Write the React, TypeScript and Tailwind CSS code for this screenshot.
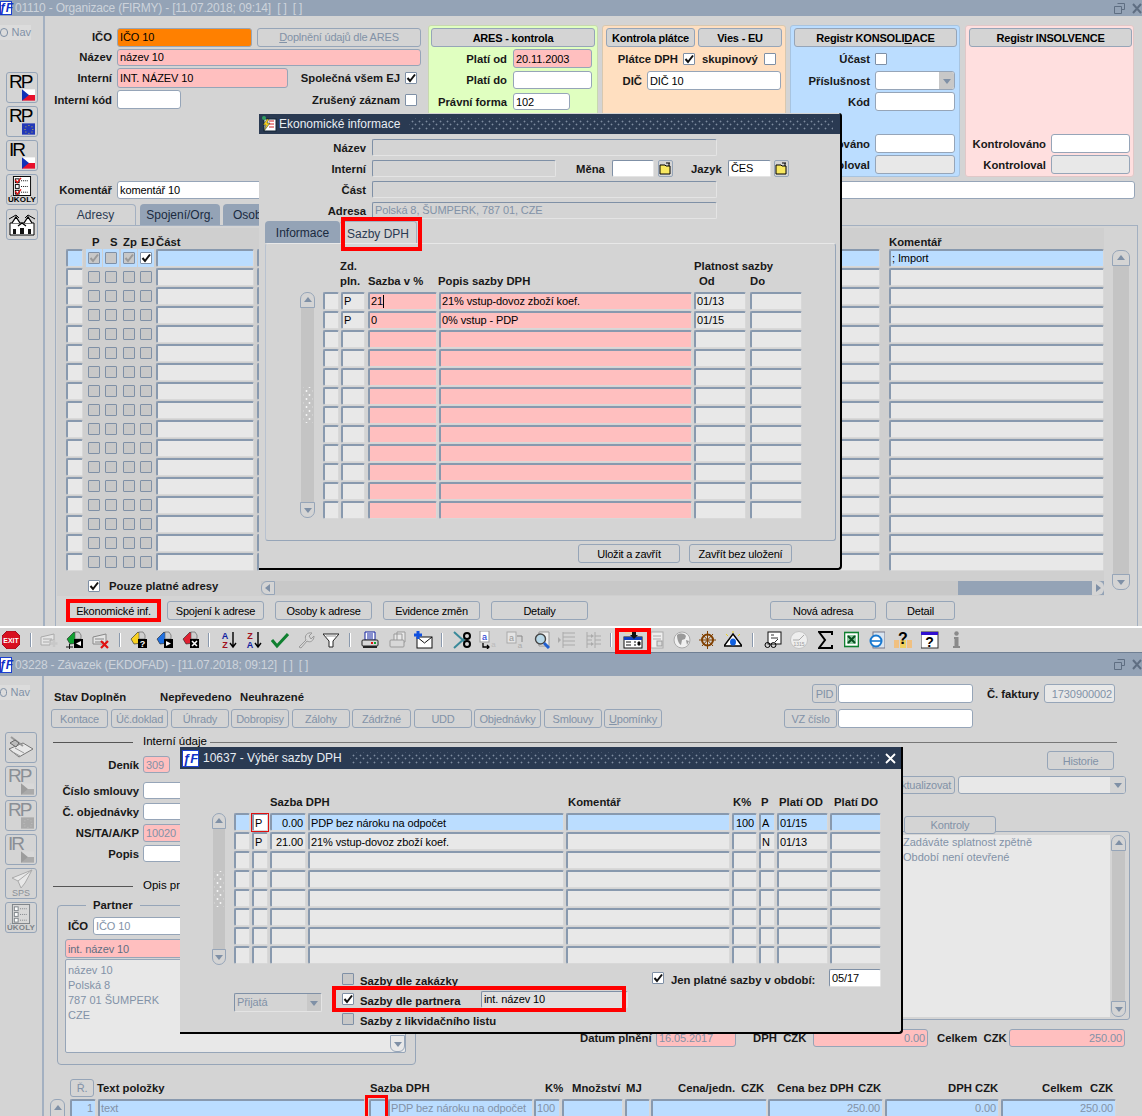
import type { ReactNode } from "react";

type P = { className?: string; children?: ReactNode };

const MUTED = "text-[#8292a7]";

const Field = ({ className = "", children }: P) => (
  <div className={`flex shrink-0 items-center overflow-hidden whitespace-nowrap rounded-[3px] border border-[#96a5b8] px-[2px] pt-[1px] text-[11px] leading-none tracking-[-0.1px] ${className}`}>
    {children}
  </div>
);

const Inset = ({ className = "", children }: P) => (
  <div className={`flex shrink-0 items-center overflow-hidden whitespace-nowrap rounded-[2px] border border-[#e4e4e4] border-t-[#7f90a6] border-l-[#7f90a6] px-[2px] text-[11px] leading-none tracking-[-0.1px] ${className}`}>
    {children}
  </div>
);

const Cell = ({ className = "", children }: P) => (
  <div className={`flex h-[18px] shrink-0 items-center overflow-hidden whitespace-nowrap rounded-[2px] border border-[#d8d8d8] border-t-2 border-t-[#8899ae] border-l-2 border-l-[#8899ae] pl-[1px] pr-[2px] text-[11px] leading-none tracking-[-0.1px] ${className}`}>
    {children}
  </div>
);

const Btn = ({ className = "", children }: P) => (
  <div className={`relative flex shrink-0 items-center justify-center whitespace-nowrap rounded-[3px] border border-[#96a5b8] pt-[1px] text-[11px] leading-none tracking-[-0.2px] ${className}`}>
    {children}
  </div>
);

const Lbl = ({ className = "", children }: P) => (
  <div className={`shrink-0 whitespace-nowrap pt-[2px] text-[11.3px] font-bold leading-none text-[#181818] ${className}`}>{children}</div>
);

const Red = ({ className = "" }: P) => <div className={`pointer-events-none absolute z-10 border-[3px] border-[#ff0000] ${className}`} />;

const Check = ({ on, dim, className = "" }: { on?: boolean; dim?: boolean; className?: string }) => (
  <div className={`flex h-[12px] w-[12px] shrink-0 items-center justify-center rounded-[1px] border border-[#7f90a6] ${dim ? "bg-[#c8c8c8]" : "bg-white"} ${className}`}>
    {on && (
      <svg width="10" height="10" viewBox="0 0 10 10">
        <path d="M1.5 5 L4 8 L9 1.5" fill="none" stroke={dim ? "#9a9a9a" : "#111"} strokeWidth="2" />
      </svg>
    )}
  </div>
);

const Arrow = ({ dir, className = "" }: { dir: "up" | "down" | "left" | "right"; className?: string }) => {
  const d = { up: "M1 7 L5 2 L9 7Z", down: "M1 3 L5 8 L9 3Z", left: "M7 1 L2 5 L7 9Z", right: "M3 1 L8 5 L3 9Z" }[dir];
  return (
    <svg width="10" height="10" viewBox="0 0 10 10" className={className}>
      <path d={d} fill="#7f90a6" />
    </svg>
  );
};

const VScroll = ({ className = "", grip }: { className?: string; grip?: boolean }) => (
  <div className={`flex shrink-0 flex-col items-center ${className}`}>
    <div className="flex h-[16px] w-full shrink-0 items-center justify-center rounded-t-[7px] border border-[#96a5b8]">
      <Arrow dir="up" />
    </div>
    <div className="flex w-[88%] flex-1 items-center justify-center bg-[#c4c4c4]">
      {grip && <div className="h-[36px] w-[10px] bg-[radial-gradient(circle,#f4f4f4_0.9px,transparent_1.2px),radial-gradient(circle,#f4f4f4_0.9px,transparent_1.2px)] bg-[length:7px_8px] bg-[position:0_0,3px_4px]" />}
    </div>
    <div className="flex h-[16px] w-full shrink-0 items-center justify-center rounded-b-[7px] border border-[#96a5b8]">
      <Arrow dir="down" />
    </div>
  </div>
);

const Logo = ({ className = "" }: P) => (
  <div className={`flex shrink-0 items-center justify-center border border-[#1b3fd0] bg-white text-[12px] font-bold italic leading-none text-[#1030c8] ${className}`}>
    ƒF
  </div>
);

const Dots = ({ className = "" }: P) => (
  <div className={`bg-[radial-gradient(circle,#7f8da0_0.8px,transparent_1.1px),radial-gradient(circle,#7f8da0_0.8px,transparent_1.1px)] bg-[length:7px_7px] bg-[position:0_0,3px_3px] ${className}`} />
);

const WinControls = () => (
  <div className="ml-auto flex items-center gap-[7px] pr-0">
    <svg width="11" height="11" viewBox="0 0 11 11">
      <path d="M3.5 .5h7v6h-3M.5 3.5h7v7h-7z" fill="none" stroke="#5f6e82" />
    </svg>
    <svg width="10" height="11" viewBox="0 0 10 11">
      <path d="M1 1 L9 10 M9 1 L1 10" stroke="#5f6e82" strokeWidth="2" />
    </svg>
  </div>
);

const Flag = ({ gray }: { gray?: boolean }) => (
  <svg width="13" height="12" viewBox="0 0 15 13" className="ml-auto">
    <rect width="15" height="6.5" fill={gray ? "#d8d8d8" : "#fff"} />
    <rect y="6.5" width="15" height="6.5" fill={gray ? "#aaa" : "#e8102c"} />
    <path d="M0 0 L8 6.5 L0 13Z" fill={gray ? "#9c9c9c" : "#1030b8"} />
  </svg>
);

const EuFlag = ({ gray }: { gray?: boolean }) => (
  <svg width="13" height="12" viewBox="0 0 15 13" className="ml-auto">
    <rect width="15" height="13" fill={gray ? "#aaa" : "#2238b8"} />
    {[[7.5, 2], [11, 3.5], [12, 6.5], [11, 9.5], [7.5, 11], [4, 9.5], [3, 6.5], [4, 3.5]].map(([x, y], i) => (
      <rect key={i} x={x} y={y} width="1" height="1" fill={gray ? "#c6c6c6" : "#f4e020"} />
    ))}
  </svg>
);

const SideBtn = ({ className = "", children }: P) => (
  <div className={`flex h-[31px] w-[32px] flex-col overflow-hidden rounded-[3px] border border-[#96a5b8] px-[1px] ${className}`}>{children}</div>
);

const RpBtn = ({ text, eu, gray, className = "" }: { text: string; eu?: boolean; gray?: boolean; className?: string }) => (
  <SideBtn className={className}>
    <div className={`h-[15px] pl-[1px] text-[19px] leading-[17px] tracking-[-2px] ${gray ? "text-[#8a8f96]" : "text-black"}`}>{text}</div>
    <div className="mt-auto flex pb-[1px] pr-[1px]">{eu ? <EuFlag gray={gray} /> : <Flag gray={gray} />}</div>
  </SideBtn>
);

const Ukoly = ({ gray, className = "" }: { gray?: boolean; className?: string }) => {
  const c = gray ? "#7d8388" : "#000";
  return (
    <SideBtn className={`items-center ${className}`}>
      <svg width="20" height="20" viewBox="0 0 20 21" className="mt-[1px] shrink-0">
        <rect x="1" y="0.5" width="18" height="20" fill={gray ? "#d8d8d8" : "#fff"} stroke={c} />
        {[3, 9, 15].map((y, i) => (
          <g key={y}>
            <rect x="3" y={y} width="4" height="4" fill="#fff" stroke={c} />
            <path d={`M9 ${y + 2}h8`} stroke={c} strokeDasharray="1 1" />
            {!gray && i !== 1 && <path d={`M3 ${y + 1} l2 3 l4 -5`} fill="none" stroke="#e01010" strokeWidth="1.4" />}
          </g>
        ))}
      </svg>
      <div className={`whitespace-nowrap text-[8px] font-bold leading-[8px] tracking-[0.2px] ${gray ? "text-[#7d8388]" : "text-black"}`}>ÚKOLY</div>
    </SideBtn>
  );
};

// toolbar pictures
const Ico = ({ className = "", w = 18, children }: P & { w?: number }) => (
  <svg width={w} height="18" viewBox={`0 0 ${w} 18`} className={`shrink-0 ${className}`}>
    {children}
  </svg>
);
const Sep = ({ className = "" }: P) => <div className={`h-[14px] w-[2px] shrink-0 border-l border-[#8a99ad] bg-white ${className}`} />;

const Doc = ({ fill, badge, mark }: { fill: string; badge?: string; mark?: ReactNode }) => (
  <>
    <path d="M1 8 L8 1 L12 4 L12 12 L4 13Z" fill={fill} stroke="#222" strokeWidth=".6" />
    <path d="M9 1h4l2 3v4h-6z" fill="#cfcfcf" stroke="#555" strokeWidth=".6" />
    <rect x="8" y="8" width="9" height="9" fill={badge || "#000"} />
    {mark}
  </>
);

const Toolbar = () => (
  <div className="relative flex h-[25px] shrink-0 items-center border-b border-b-[#6f7f93] bg-[#d4d4d4]">
    <Ico className="ml-[2px]">
      <path d="M5 0h8l5 5v8l-5 5H5l-5-5V5z" fill="#d81020" stroke="#a01020" />
      <text x="9" y="11.5" textAnchor="middle" fontSize="7" fontWeight="700" fill="#fff">EXIT</text>
    </Ico>
    <Sep className="ml-[10px]" />
    <Ico className="ml-[8px]"><path d="M1 6 L14 3 V9 H10 V14 H1Z" fill="#e4e4e4" stroke="#aaa" /><path d="M3 8h9M3 11h6" stroke="#aaa" /><path d="M14 9v7M10.5 12.5h7" stroke="#c8c8c8" strokeWidth="2.4" /></Ico>
    <Ico className="ml-[8px]"><Doc fill="#10a030" mark={<path d="M15 10 L10 12.5 L15 15Z" fill="#fff" />} /><path d="M0 16h7M3.5 13v5" stroke="#111" /></Ico>
    <Ico className="ml-[8px]"><path d="M1 6 L14 3 V13 H1Z" fill="#e4e4e4" stroke="#888" /><path d="M3 8h9M3 11h9" stroke="#888" /><path d="M9 10 L16 17 M16 10 L9 17" stroke="#e01010" strokeWidth="2.2" /></Ico>
    <Sep className="ml-[9px]" />
    <Ico className="ml-[9px]"><Doc fill="#f8d020" mark={<text x="12.5" y="16" textAnchor="middle" fontSize="9" fontWeight="700" fill="#fff">?</text>} /></Ico>
    <Ico className="ml-[8px]"><Doc fill="#2070e0" mark={<path d="M10 10 L15 12.5 L10 15Z" fill="#fff" />} /></Ico>
    <Ico className="ml-[8px]"><Doc fill="#e02030" mark={<path d="M10 10 L15 15 M15 10 L10 15" stroke="#fff" strokeWidth="1.6" />} /></Ico>
    <Sep className="ml-[8px]" />
    <Ico w={17} className="ml-[10px]"><text x="5" y="8" textAnchor="middle" fontSize="9" fontWeight="700" fill="#1020a0">A</text><text x="5" y="17" textAnchor="middle" fontSize="9" fontWeight="700" fill="#a01020">Z</text><path d="M13 1v14M10 12l3 4 3-4" fill="none" stroke="#000" strokeWidth="1.4" /></Ico>
    <Ico w={17} className="ml-[8px]"><text x="5" y="8" textAnchor="middle" fontSize="9" fontWeight="700" fill="#a01020">Z</text><text x="5" y="17" textAnchor="middle" fontSize="9" fontWeight="700" fill="#1020a0">A</text><path d="M13 1v14M10 12l3 4 3-4" fill="none" stroke="#000" strokeWidth="1.4" /></Ico>
    <Ico className="ml-[9px]"><path d="M1 9 L6 15 L17 3" fill="none" stroke="#108030" strokeWidth="3" /></Ico>
    <Ico className="ml-[8px]"><path d="M2 16 L9 9 C7 5 10 1 15 2 L12 5 L14 8 L17 5 C17 10 13 12 10 10 L4 17Z" fill="#d8d8d8" stroke="#999" /></Ico>
    <Ico w={16} className="ml-[8px]"><path d="M0 3h16l-6 7v6h-4v-6z" fill="#fff" stroke="#222" /><path d="M3 5h10" stroke="#999" /></Ico>
    <Sep className="ml-[10px]" />
    <Ico className="ml-[10px]"><path d="M4 1h10v8H4z" fill="#fff" stroke="#1020a0" /><path d="M6 3h6M6 5h6M6 7h6" stroke="#1020a0" /><rect x="1" y="9" width="16" height="6" rx="1" fill="#d8d8d8" stroke="#222" /><rect x="10" y="11" width="2" height="2" fill="#e01010" /><rect x="13" y="11" width="2" height="2" fill="#10a030" /><path d="M2 15h14v2H2z" fill="#222" /></Ico>
    <Ico className="ml-[10px]"><path d="M8 1h8v10H8zM5 3h8v10H5z" fill="#e8e8e8" stroke="#999" /><rect x="1" y="9" width="14" height="7" rx="1" fill="#d8d8d8" stroke="#999" /></Ico>
    <Ico w={19} className="ml-[7px]"><rect x="3" y="6" width="15" height="11" fill="#fff" stroke="#111" /><path d="M3 6l7.5 6L18 6" fill="none" stroke="#111" /><path d="M4 0v8M0 4h8" stroke="#1050e0" strokeWidth="3" /></Ico>
    <Sep className="ml-[8px]" />
    <Ico className="ml-[10px]"><path d="M1 1 L12 11 M1 17 L12 7" stroke="#3a8a9a" strokeWidth="2" /><circle cx="14" cy="5" r="3" fill="none" stroke="#000" strokeWidth="2" /><circle cx="14" cy="13" r="3" fill="none" stroke="#000" strokeWidth="2" /></Ico>
    <Ico className="ml-[8px]"><rect x="1" y="0" width="9" height="11" fill="#fff" stroke="#999" /><text x="5.5" y="9" textAnchor="middle" fontSize="9" fill="#1030d0">a</text><text x="14.5" y="16" textAnchor="middle" fontSize="8" fill="#bbb">a</text><path d="M4 12v4h6M8 14l2 2-2 2" fill="none" stroke="#000" strokeWidth="1.3" /></Ico>
    <Ico className="ml-[9px]"><rect x="1" y="1" width="9" height="11" fill="#e4e4e4" stroke="#aaa" /><text x="5.5" y="10" textAnchor="middle" fontSize="9" fill="#999">a</text><text x="14" y="17" textAnchor="middle" fontSize="8" fill="#aaa">a</text><path d="M11 5h5v6" fill="none" stroke="#888" /></Ico>
    <Ico className="ml-[9px]"><path d="M6 1h10v14H6z" fill="#eee" stroke="#999" /><circle cx="7.5" cy="8" r="5" fill="#b8d8e8" stroke="#444" strokeWidth="1.4" /><path d="M11 12l5 5" stroke="#2060d0" strokeWidth="3" /></Ico>
    <Ico className="ml-[7px]"><path d="M0 6l3 3-3 3z" fill="#aaa" /><path d="M5 1v16M5 2h12M5 6h12M5 10h12M5 14h12" stroke="#aaa" /></Ico>
    <Ico className="ml-[7px]"><path d="M4 1v16M12 1v16M4 5h5M4 9h5M4 13h5M12 5h6M12 9h6M12 13h6" stroke="#aaa" /><path d="M8 3l3 2-3 2zM8 11l3 2-3 2z" fill="#aaa" /></Ico>
    <Sep className="ml-[9px]" />
    <div className="relative ml-[11px] flex h-[18px] w-[20px] shrink-0 items-center justify-center">
      <Ico w={20}><path d="M2 0h9l2 3H2z" fill="#e8d8a8" /><rect x="1" y="6" width="18" height="11" fill="#fff" stroke="#111" /><rect x="1" y="6" width="18" height="3" fill="#1040c0" /><path d="M3 11h5M3 14h5M11 11h2M11 14h2M15 11h2v3h-2z" stroke="#111" /><path d="M9 0h4v4h2l-4 4-4-4h2z" fill="#111" /></Ico>
      <Red className="-left-[8px] -top-[3px] h-[26px] w-[36px] border-[4px]" />
    </div>
    <Ico w={14} className="ml-[7px]"><rect x="1" y="1" width="12" height="16" fill="#eee" stroke="#aaa" /><path d="M3 5h8M3 8h8" stroke="#aaa" /><rect x="7" y="10" width="5" height="5" fill="#ddd" stroke="#999" /></Ico>
    <Ico className="ml-[9px]"><circle cx="9" cy="9" r="8" fill="#f0f0f0" stroke="#aaa" /><path d="M4 4c3-2 7-2 9 1l-1 3-3 1-1 5c-2-1-4-5-4-10z" fill="#9a9a9a" /><path d="M13 9l3 1-2 4z" fill="#9a9a9a" /></Ico>
    <Ico w={17} className="ml-[8px]"><circle cx="8.5" cy="9" r="5.5" fill="none" stroke="#804000" strokeWidth="2" /><path d="M8.5 0v18M0 9h17M3 3l11 12M14 3L3 15" stroke="#804000" /></Ico>
    <Ico className="ml-[8px]"><path d="M9 3L18 15H0z" fill="#fff" stroke="#000" strokeWidth="1.4" /><ellipse cx="9" cy="11" rx="3" ry="3.5" fill="#1060e0" /><path d="M2 3l2 2M16 3l-2 2M9 0v2" stroke="#e8d020" /></Ico>
    <Sep className="ml-[10px]" />
    <Ico className="ml-[10px]"><rect x="4" y="1" width="13" height="12" fill="#fff" stroke="#111" /><path d="M7 4h3M7 7h7M11 11l3-3" stroke="#333" /><circle cx="3.5" cy="14" r="2.5" fill="none" stroke="#000" /><circle cx="9.5" cy="14" r="2.5" fill="none" stroke="#000" /></Ico>
    <Ico className="ml-[8px]"><circle cx="9" cy="9" r="8.5" fill="#eee" stroke="#c4c4c4" /><path d="M3 9h6l5-5" stroke="#aaa" fill="none" /><text x="9" y="15" textAnchor="middle" fontSize="5" fill="#999">1315</text></Ico>
    <Ico w={15} className="ml-[10px]"><path d="M14 4V1H1l6 8-6 8h13v-3" fill="none" stroke="#000" strokeWidth="2" /></Ico>
    <Ico w={15} className="ml-[11px]"><rect x=".5" y="1.5" width="14" height="14" fill="#fff" stroke="#108030" strokeWidth="1.6" /><rect x="3" y="4" width="9" height="9" fill="#8fc8a0" /><path d="M4 5l7 7M11 5l-7 7" stroke="#085020" strokeWidth="2" /></Ico>
    <Ico w={16} className="ml-[10px]"><rect x="4" y="1" width="12" height="16" fill="#d8e4f0" stroke="#778" /><circle cx="7" cy="10" r="5.5" fill="#fff" stroke="#1878d0" strokeWidth="2" /><path d="M2 10h10" stroke="#1878d0" strokeWidth="1.6" /></Ico>
    <Ico className="ml-[9px]"><rect x="0" y="9" width="5" height="8" fill="#f0c080" /><rect x="13" y="9" width="5" height="8" fill="#f0c080" /><rect x="6" y="9" width="6" height="8" fill="#f0d060" /><text x="9" y="13" textAnchor="middle" fontSize="16" fontWeight="700" fill="#000">?</text></Ico>
    <Ico className="ml-[9px]"><rect x="0" y="1" width="17" height="16" fill="#fff" stroke="#333" /><rect x="0" y="1" width="17" height="3" fill="#3010d0" /><text x="8.5" y="16" textAnchor="middle" fontSize="14" fontWeight="700" fill="#000">?</text></Ico>
    <Ico w={9} className="ml-[13px]"><circle cx="4.5" cy="2.5" r="2.2" fill="#8a8a8a" /><path d="M2 6h4.5v9H8v2H1v-2h1.5V8H2z" fill="#8a8a8a" /></Ico>
  </div>
);

const TopWindow = () => (
  <div className="relative flex h-[626px] shrink-0 flex-col overflow-hidden bg-[#d4d4d4]">
    <div className="flex h-[16px] shrink-0 items-center bg-[#94a3b6] text-[12px] tracking-[-0.2px] text-[#cdd3db]">
      <Logo className="h-[14px] w-[12px]" />
      <div className="ml-[3px] whitespace-pre">01110 - Organizace (FIRMY) - [11.07.2018; 09:14]  [ ]  [ ]</div>
      <WinControls />
    </div>

    <div className="flex flex-1">
      {/* nav */}
      <div className="flex w-[45px] shrink-0 flex-col border-r-2 border-r-[#a3b0c1] pl-[6px]">
        <div className="-ml-[6px] mt-[9px] flex h-[15px] w-[31px] items-center gap-[3px] bg-[#dcdcdc] text-[11px] leading-none text-[#8292a7]">
          <span className="h-[9px] w-[9px] rounded-full border border-[#7f90a6]" />
          Nav
        </div>
        <RpBtn text="RP" className="mt-[32px]" />
        <RpBtn text="RP" eu className="mt-[3px]" />
        <RpBtn text="IR" className="mt-[3px]" />
        <Ukoly className="mt-[3px]" />
        <SideBtn className="mt-[4px] items-center justify-center">
          <svg width="26" height="22" viewBox="0 0 26 22">
            <path d="M1 9h24v12H1z" fill="#fff" stroke="#000" />
            <path d="M3 9l4-6 4 6M15 9l4-6 4 6M9 12l4-3 4 3" fill="#fff" stroke="#000" strokeWidth="1.3" />
            <path d="M0 5l7-4 3 3M16 4l3-3 7 4" fill="none" stroke="#000" />
            <path d="M4 20v-5h3v5M11 20v-6h4v6M19 20v-5h3v5" fill="#111" />
          </svg>
        </SideBtn>
      </div>

      <div className="flex min-w-0 flex-1 flex-col">
        <div className="mt-[9px] flex h-[152px] shrink-0">
          {/* left form */}
          <div className="flex w-[383px] shrink-0 flex-col pt-[2px]">
            <div className="flex h-[20px] items-center">
              <Lbl className="w-[67px] text-right">IČO</Lbl>
              <Field className="ml-[5px] h-[19px] w-[135px] bg-[#ff8000]">IČO 10</Field>
              <Btn className={`ml-[5px] h-[19px] w-[164px] ${MUTED}`}><span><u>D</u>oplnění údajů dle ARES</span></Btn>
            </div>
            <div className="mt-[1px] flex h-[18px] items-center">
              <Lbl className="w-[67px] text-right">Název</Lbl>
              <Field className="ml-[5px] h-[17px] w-[304px] bg-[#ffbfbf]">název 10</Field>
            </div>
            <div className="mt-[2px] flex h-[20px] items-center">
              <Lbl className="w-[67px] text-right">Interní</Lbl>
              <Field className="ml-[5px] h-[20px] w-[171px] bg-[#ffbfbf]">INT. NÁZEV 10</Field>
              <Lbl className="w-[112px] text-right">Společná všem EJ</Lbl>
              <Check on className="ml-[5px]" />
            </div>
            <div className="mt-[2px] flex h-[19px] items-center">
              <Lbl className="w-[67px] text-right">Interní kód</Lbl>
              <Field className="ml-[5px] h-[19px] w-[64px] bg-white" />
              <Lbl className="w-[219px] text-right">Zrušený záznam</Lbl>
              <Check className="ml-[5px]" />
            </div>
          </div>

          {/* green */}
          <div className="flex w-[170px] shrink-0 flex-col rounded-[3px] border border-[#c8d8b0] bg-[#e0ffc0] pl-[2px] pt-[2px]">
            <Btn className="h-[19px] w-[164px] bg-[#d4d4d4] font-bold">ARES - kontrola</Btn>
            <div className="mt-[2px] flex h-[19px] items-center">
              <Lbl className="w-[76px] text-right">Platí od</Lbl>
              <Field className="ml-[6px] h-[19px] w-[79px] bg-[#ffbfbf]">20.11.2003</Field>
            </div>
            <div className="mt-[3px] flex h-[18px] items-center">
              <Lbl className="w-[76px] text-right">Platí do</Lbl>
              <Field className="ml-[6px] h-[18px] w-[79px] bg-white" />
            </div>
            <div className="mt-[4px] flex h-[17px] items-center">
              <Lbl className="w-[76px] text-right">Právní forma</Lbl>
              <Field className="ml-[6px] h-[17px] w-[57px] bg-white">102</Field>
            </div>
          </div>

          {/* peach */}
          <div className="ml-[4px] flex w-[184px] shrink-0 flex-col rounded-[3px] border border-[#d8c8b0] bg-[#ffdfc0] pl-[3px] pt-[2px]">
            <div className="flex gap-[3px]">
              <Btn className="h-[19px] w-[89px] bg-[#d4d4d4] font-bold">Kontrola plátce</Btn>
              <Btn className="h-[19px] w-[84px] bg-[#d4d4d4] font-bold">Vies - EU</Btn>
            </div>
            <div className="mt-[2px] flex h-[20px] items-center">
              <Lbl className="w-[72px] text-right">Plátce DPH</Lbl>
              <Check on className="ml-[5px]" />
              <Lbl className="ml-[7px] w-[57px]">skupinový</Lbl>
              <Check className="ml-[5px]" />
            </div>
            <div className="mt-[2px] flex h-[19px] items-center">
              <Lbl className="w-[36px] text-right">DIČ</Lbl>
              <Field className="ml-[5px] h-[19px] w-[134px] bg-white">DIČ 10</Field>
            </div>
          </div>

          {/* blue */}
          <div className="ml-[4px] flex w-[170px] shrink-0 flex-col rounded-[3px] border border-[#a8c4e0] bg-[#bbddff] pl-[3px] pt-[2px]">
            <Btn className="h-[19px] w-[163px] bg-[#d4d4d4] font-bold"><span>Registr KONSOLI<u>D</u>ACE</span></Btn>
            <div className="mt-[2px] flex h-[20px] items-center">
              <Lbl className="w-[76px] text-right">Účast</Lbl>
              <Check className="ml-[5px]" />
            </div>
            <div className="mt-[2px] flex h-[19px] items-center">
              <Lbl className="w-[76px] text-right">Příslušnost</Lbl>
              <Field className="ml-[5px] h-[19px] w-[80px] justify-end bg-white !p-0">
                <div className="flex h-full w-[15px] items-center justify-center bg-[#c8c8c8]"><Arrow dir="down" /></div>
              </Field>
            </div>
            <div className="mt-[2px] flex h-[19px] items-center">
              <Lbl className="w-[76px] text-right">Kód</Lbl>
              <Field className="ml-[5px] h-[19px] w-[80px] bg-white" />
            </div>
            <div className="mt-[23px] flex h-[19px] items-center">
              <Lbl className="w-[76px] text-right">Kontrolováno</Lbl>
              <Field className="ml-[5px] h-[19px] w-[80px] bg-white" />
            </div>
            <div className="mt-[2px] flex h-[19px] items-center">
              <Lbl className="w-[76px] text-right">Kontroloval</Lbl>
              <Field className="ml-[5px] h-[19px] w-[80px] bg-[#e8e8e8]" />
            </div>
          </div>

          {/* pink */}
          <div className="ml-[5px] flex w-[169px] shrink-0 flex-col rounded-[3px] border border-[#e0c8c8] bg-[#ffdfdf] pl-[3px] pt-[2px]">
            <Btn className="h-[19px] w-[163px] bg-[#d4d4d4] font-bold">Registr INSOLVENCE</Btn>
            <div className="mt-[87px] flex h-[19px] items-center">
              <Lbl className="w-[77px] text-right">Kontrolováno</Lbl>
              <Field className="ml-[5px] h-[19px] w-[79px] bg-white" />
            </div>
            <div className="mt-[2px] flex h-[19px] items-center">
              <Lbl className="w-[77px] text-right">Kontroloval</Lbl>
              <Field className="ml-[5px] h-[19px] w-[79px] bg-[#e8e8e8]" />
            </div>
          </div>
        </div>

        <div className="mt-[4px] flex h-[18px] shrink-0 items-center">
          <Lbl className="w-[67px] text-right">Komentář</Lbl>
          <Field className="ml-[5px] h-[18px] w-[1018px] bg-white">komentář 10</Field>
        </div>

        {/* tabs */}
        <div className="mt-[5px] flex h-[21px] shrink-0 items-end pl-[10px] text-[12px]">
          <div className="flex h-[21px] w-[81px] items-center justify-center rounded-t-[4px] border border-b-0 border-[#a3b0c1] text-[#2a3a52]">Adresy</div>
          <div className="ml-[4px] flex h-[21px] w-[80px] items-center justify-center rounded-t-[4px] bg-[#94a3b6] text-[#1a2a40]">Spojení/Org.</div>
          <div className="ml-[3px] flex h-[21px] w-[60px] items-center rounded-t-[4px] bg-[#94a3b6] pl-[10px] text-[#1a2a40]">Osoby</div>
        </div>
        <div className="ml-[10px] flex w-[1083px] flex-1 flex-col border-x border-t border-[#a3b0c1] pl-[1px] pt-[2px]">
          <div className="flex">
            <div className="flex h-[368px] w-[1047px] shrink-0 flex-col overflow-hidden bg-[#cfcfcf] pl-[9px]">
              <div className="flex h-[21px] shrink-0 items-end pb-[1px]">
                <Lbl className="ml-[26px] w-[18px]">P</Lbl>
                <Lbl className="w-[13px]">S</Lbl>
                <Lbl className="w-[18px]">Zp</Lbl>
                <Lbl className="w-[15px]">EJ</Lbl>
                <Lbl className="w-[733px]">Část</Lbl>
                <Lbl>Komentář</Lbl>
              </div>
              {Array.from({ length: 17 }).map((_, i) => {
                const tone = i === 0 ? "bg-[#bbddff]" : "bg-[#e8e8e8]";
                const box = i === 0 ? "bg-[#bbddff]" : "";
                return (
                  <div key={i} className="flex h-[19px] shrink-0">
                    <Cell className={`w-[17px] ${tone}`} />
                    <div className={`ml-[3px] flex h-[18px] w-[16px] shrink-0 items-center justify-center ${box}`}><Check dim on={i === 0} /></div>
                    <div className={`ml-[1px] flex h-[18px] w-[16px] shrink-0 items-center justify-center ${box}`}><Check dim /></div>
                    <div className={`ml-[2px] flex h-[18px] w-[16px] shrink-0 items-center justify-center ${box}`}><Check dim on={i === 0} /></div>
                    <div className={`ml-[1px] flex h-[18px] w-[16px] shrink-0 items-center justify-center ${box}`}><Check dim={i !== 0} on={i === 0} /></div>
                    <Cell className={`ml-[2px] w-[98px] ${tone}`} />
                    <Cell className={`ml-[3px] w-[623px] ${tone}`} />
                    <Cell className={`ml-[9px] w-[215px] ${tone}`}>{i === 0 ? "; Import" : ""}</Cell>
                  </div>
                );
              })}
              <div className="-ml-[9px] mt-[7px] flex h-[16px] shrink-0 items-start">
                <Check on className="ml-[31px] mt-[1px]" />
                <Lbl className="ml-[9px] w-[152px]">Pouze platné adresy</Lbl>
                <div className="mt-[2px] flex h-[14px] w-[843px] shrink-0">
                  <div className="flex h-full w-[697px] items-center bg-[#c8c8c8]">
                    <div className="flex h-full w-[14px] items-center justify-center rounded-l-[6px] border border-[#96a5b8] bg-[#d4d4d4]"><Arrow dir="left" /></div>
                  </div>
                  <div className="flex h-full flex-1 items-center justify-end bg-[#94a3b6]">
                    <div className="flex h-full w-[12px] items-center justify-center rounded-r-[6px] bg-[#d4d4d4]"><Arrow dir="right" /></div>
                  </div>
                </div>
              </div>
            </div>
            <VScroll className="ml-[8px] mt-[22px] h-[340px] w-[18px]" />
          </div>
          <div className="mt-[5px] flex">
            <Btn className="ml-[12px] h-[19px] w-[89px]">
              Ekonomické inf.
              <Red className="-inset-x-[4px] -inset-y-[3px] border-[4px]" />
            </Btn>
            <Btn className="ml-[9px] h-[19px] w-[97px]">Spojení k adrese</Btn>
            <Btn className="ml-[11px] h-[19px] w-[97px]">Osoby k adrese</Btn>
            <Btn className="ml-[11px] h-[19px] w-[97px]">Evidence změn</Btn>
            <Btn className="ml-[11px] h-[19px] w-[97px]">Detaily</Btn>
            <Btn className="ml-[182px] h-[19px] w-[106px]">Nová adresa</Btn>
            <Btn className="ml-[10px] h-[19px] w-[69px]">Detail</Btn>
          </div>
        </div>
      </div>
    </div>

    <EkonDialog />
  </div>
);

const FolderBtn = ({ className = "" }: P) => (
  <div className={`flex h-[17px] w-[15px] shrink-0 items-center justify-center rounded-[2px] border border-[#96a5b8] ${className}`}>
    <svg width="13" height="13" viewBox="0 0 13 13">
      <path d="M1 3h5l1 1h4v8H1z" fill="#f8e860" stroke="#000" />
      <path d="M7 1l4 0M10 1v3" stroke="#000" />
    </svg>
  </div>
);

const EkonDialog = () => (
  <div className="absolute left-[259px] top-[113px] z-20 flex h-[457px] w-[583px] flex-col rounded-br-[4px] rounded-tr-[3px] border-b-2 border-r-2 border-b-black border-r-black bg-[#d4d4d4]">
    <div className="mt-[1px] flex h-[20px] shrink-0 items-center bg-[#2a3a52] pl-[2px] pr-[7px]">
      <svg width="16" height="16" viewBox="0 0 16 16" className="shrink-0">
        <rect x="3" y="3" width="12" height="12" fill="#fff" stroke="#123" />
        <path d="M8 5h5M8 8h5M8 11h5" stroke="#d02020" />
        <path d="M6 3L2 9h3l-2 6 6-8H6l2-4z" fill="#f8d020" stroke="#123" strokeWidth=".5" />
        <circle cx="3" cy="2" r="2" fill="#30a060" />
      </svg>
      <div className="ml-[2px] whitespace-nowrap text-[12px] leading-none text-[#e8edf3]">Ekonomické informace</div>
      <Dots className="ml-[9px] h-[12px] flex-1" />
    </div>
    <div className="mt-[5px] flex h-[17px] shrink-0 items-center">
      <Lbl className="w-[107px] text-right">Název</Lbl>
      <Inset className="ml-[6px] h-[17px] w-[345px]" />
    </div>
    <div className="mt-[4px] flex h-[17px] shrink-0 items-center">
      <Lbl className="w-[107px] text-right">Interní</Lbl>
      <Inset className="ml-[6px] h-[17px] w-[184px]" />
      <Lbl className="ml-[20px] w-[30px]">Měna</Lbl>
      <Inset className="ml-[6px] h-[17px] w-[42px] bg-white" />
      <FolderBtn className="ml-[4px]" />
      <Lbl className="ml-[18px] w-[31px]">Jazyk</Lbl>
      <Inset className="ml-[6px] h-[17px] w-[43px] bg-white">ČES</Inset>
      <FolderBtn className="ml-[3px]" />
    </div>
    <div className="mt-[4px] flex h-[17px] shrink-0 items-center">
      <Lbl className="w-[107px] text-right">Část</Lbl>
      <Inset className="ml-[6px] h-[17px] w-[345px]" />
    </div>
    <div className="mt-[4px] flex h-[17px] shrink-0 items-center">
      <Lbl className="w-[107px] text-right">Adresa</Lbl>
      <Inset className={`ml-[6px] h-[17px] w-[345px] ${MUTED}`}>Polská 8, ŠUMPERK, 787 01, CZE</Inset>
    </div>

    <div className="mt-[2px] flex h-[22px] shrink-0 pl-[6px] text-[12px]">
      <div className="flex w-[75px] items-center justify-center rounded-t-[4px] bg-[#94a3b6] pt-[2px] text-[#1a2a40]">Informace</div>
      <div className="relative flex w-[77px] items-center justify-center rounded-t-[3px] border-r border-t border-[#a3b0c1] pt-[2px] text-[#2a3a52]">
        Sazby DPH
        <Red className="-top-[5px] left-[1px] h-[34px] w-[81px] border-[4px]" />
      </div>
    </div>
    <div className="ml-[6px] flex h-[298px] w-[571px] shrink-0 flex-col rounded-[3px] border border-[#e8e8e8] border-l-[#b8c2d0] border-b-[#96a5b8] border-r-[#96a5b8]">
      <div className="mt-[14px] flex h-[15px] shrink-0 items-center">
        <Lbl className="ml-[74px] w-[354px]">Zd.</Lbl>
        <Lbl>Platnost sazby</Lbl>
      </div>
      <div className="flex h-[15px] shrink-0 items-center">
        <Lbl className="ml-[74px] w-[28px]">pln.</Lbl>
        <Lbl className="w-[70px]">Sazba v %</Lbl>
        <Lbl className="w-[261px]">Popis sazby DPH</Lbl>
        <Lbl className="w-[51px]">Od</Lbl>
        <Lbl>Do</Lbl>
      </div>
      <div className="mt-[4px] flex">
        <VScroll grip className="ml-[34px] h-[226px] w-[15px]" />
        <div className="ml-[8px] flex flex-col">
          {[["P", "21", "21% vstup-dovoz zboží koef.", "01/13"], ["P", "0", "0% vstup - PDP", "01/15"], ...Array.from({ length: 10 }).map(() => ["", "", "", ""])].map((r, i) => (
            <div key={i} className="flex h-[19px]">
              <Cell className="w-[16px] bg-[#e8e8e8]" />
              <Cell className="ml-[2px] w-[24px] bg-[#e8e8e8]">{r[0]}</Cell>
              <Cell className="ml-[3px] w-[69px] bg-[#ffbfbf]">
                {r[1]}
                {i === 0 && <span className="h-[13px] w-[1px] bg-black" />}
              </Cell>
              <Cell className="ml-[2px] w-[253px] bg-[#ffbfbf]">{r[2]}</Cell>
              <Cell className="ml-[2px] w-[52px] bg-[#e8e8e8]">{r[3]}</Cell>
              <Cell className="ml-[4px] w-[52px] bg-[#e8e8e8]" />
            </div>
          ))}
        </div>
      </div>
    </div>
    <div className="mt-[3px] flex shrink-0">
      <Btn className="ml-[319px] h-[19px] w-[102px]">Uložit a zavřít</Btn>
      <Btn className="ml-[9px] h-[19px] w-[103px]">Zavřít bez uložení</Btn>
    </div>
  </div>
);

const SazbyDialog = () => (
  <div className="absolute left-[180px] top-[94px] z-20 flex h-[287px] w-[723px] flex-col rounded-br-[4px] border-b-2 border-r-2 border-b-black border-r-black bg-[#d4d4d4]">
    <div className="flex h-[22px] shrink-0 items-center bg-[#2a3a52] pl-[2px] pr-[5px]">
      <Logo className="h-[17px] w-[17px] text-[13px]" />
      <div className="ml-[4px] whitespace-nowrap text-[12px] leading-none text-[#e8edf3]">10637 - Výběr sazby DPH</div>
      <Dots className="ml-[8px] h-[12px] flex-1" />
      <svg width="11" height="11" viewBox="0 0 11 11" className="ml-[6px] shrink-0">
        <path d="M1 1 L10 10 M10 1 L1 10" stroke="#fff" strokeWidth="1.8" />
      </svg>
    </div>
    <div className="mt-[26px] flex h-[14px] shrink-0 items-center">
      <Lbl className="ml-[90px] w-[298px]">Sazba DPH</Lbl>
      <Lbl className="w-[165px]">Komentář</Lbl>
      <Lbl className="w-[28px]">K%</Lbl>
      <Lbl className="w-[18px]">P</Lbl>
      <Lbl className="w-[55px]">Platí OD</Lbl>
      <Lbl>Platí DO</Lbl>
    </div>
    <div className="mt-[4px] flex shrink-0">
      <VScroll grip className="ml-[32px] h-[152px] w-[14px]" />
      <div className="ml-[8px] flex flex-col">
        {[
          ["P", "0.00", "PDP bez nároku na odpočet", "100", "A", "01/15"],
          ["P", "21.00", "21% vstup-dovoz zboží koef.", "", "N", "01/13"],
          ...Array.from({ length: 6 }).map(() => ["", "", "", "", "", ""]),
        ].map((r, i) => {
          const tone = i === 0 ? "bg-[#bbddff] pt-[2px]" : "bg-[#e8e8e8] pt-[2px]";
          return (
            <div key={i} className="flex h-[19px]">
              <Cell className={`w-[16px] ${tone}`} />
              <div className="relative ml-[2px]">
                <Cell className={`w-[16px] pt-[2px] ${i === 0 ? "bg-white" : "bg-[#e8e8e8]"}`}>{r[0]}</Cell>
                {i === 0 && <div className="pointer-events-none absolute -inset-x-[1px] inset-y-0 border border-[#e01010]" />}
              </div>
              <Cell className={`ml-[2px] w-[36px] justify-end ${tone}`}>{r[1]}</Cell>
              <Cell className={`ml-[2px] w-[256px] ${tone}`}>{r[2]}</Cell>
              <Cell className={`ml-[2px] w-[164px] ${tone}`} />
              <Cell className={`ml-[2px] w-[25px] justify-end ${tone}`}>{r[3]}</Cell>
              <Cell className={`ml-[2px] w-[16px] ${tone}`}>{r[4]}</Cell>
              <Cell className={`ml-[2px] w-[51px] ${tone}`}>{r[5]}</Cell>
              <Cell className={`ml-[2px] w-[51px] ${tone}`} />
            </div>
          );
        })}
      </div>
    </div>
    <div className="flex">
      <Inset className={`ml-[54px] mt-[28px] h-[19px] w-[88px] justify-between pr-0 ${MUTED}`}>
        Přijatá
        <div className="flex h-full w-[14px] items-center justify-center bg-[#c8c8c8]"><Arrow dir="down" /></div>
      </Inset>
      <div className="ml-[20px] mt-[6px] flex w-[287px] shrink-0 flex-col">
        <div className="flex h-[20px] items-start pt-[2px]">
          <Check dim />
          <Lbl className="ml-[6px] mt-[1px]">Sazby dle zakázky</Lbl>
        </div>
        <div className="relative flex h-[20px] items-start pt-[2px]">
          <Check on />
          <Lbl className="ml-[6px] mt-[1px] w-[121px]">Sazby dle partnera</Lbl>
          <Inset className="-mt-[2px] h-[17px] w-[147px] bg-[#e0e0e0]">int. název 10</Inset>
          <Red className="-left-[10px] -top-[5px] h-[26px] w-[294px] border-[4px]" />
        </div>
        <div className="flex h-[20px] items-start pt-[2px]">
          <Check dim />
          <Lbl className="ml-[6px] mt-[1px]">Sazby z likvidačního listu</Lbl>
        </div>
      </div>
      <div className="ml-[23px] mt-[4px] flex h-[18px] shrink-0 items-center">
        <Check on />
        <Lbl className="ml-[7px] w-[158px] !pt-[5px]">Jen platné sazby v období:</Lbl>
        <Inset className="h-[18px] w-[52px] bg-white">05/17</Inset>
      </div>
    </div>
  </div>
);

const BottomWindow = () => (
  <div className="relative flex flex-1 flex-col overflow-hidden bg-[#d4d4d4]">
    <div className="flex h-[23px] shrink-0 items-center bg-[#94a3b6] text-[12px] tracking-[-0.2px] text-[#cdd3db]">
      <Logo className="h-[16px] w-[12px]" />
      <div className="ml-[3px] whitespace-pre">03228 - Závazek (EKDOFAD) - [11.07.2018; 09:12]  [ ]  [ ]</div>
      <WinControls />
    </div>

    <div className="flex flex-1">
      <div className="flex w-[44px] shrink-0 flex-col border-r-2 border-r-[#a3b0c1] pl-[5px]">
        <div className="-ml-[5px] mt-[9px] flex h-[15px] w-[30px] items-center gap-[3px] bg-[#dcdcdc] text-[11px] leading-none text-[#8292a7]">
          <span className="h-[9px] w-[9px] rounded-full border border-[#7f90a6]" />
          Nav
        </div>
        <SideBtn className="mt-[32px] items-center justify-center">
          <svg width="28" height="24" viewBox="0 0 28 24">
            <path d="M2 13l14-6 10 6-14 8z" fill="#e8e8e8" stroke="#777" />
            <path d="M4 15l9 5M8 12l9 5" stroke="#999" />
            <path d="M4 1l12 9" stroke="#999" strokeWidth="2" />
            <path d="M3 7l5-3 4 3-3 4z" fill="#bbb" stroke="#666" />
          </svg>
        </SideBtn>
        <RpBtn text="RP" gray className="mt-[3px]" />
        <RpBtn text="RP" eu gray className="mt-[3px]" />
        <RpBtn text="IR" gray className="mt-[3px]" />
        <SideBtn className="mt-[3px] items-center">
          <svg width="24" height="20" viewBox="0 0 24 20" className="shrink-0">
            <path d="M23 1L3 9l6 3 3 7 4-5z" fill="#e8e8e8" stroke="#aaa" />
            <path d="M9 12L23 1" stroke="#aaa" />
          </svg>
          <div className="text-[9px] leading-[9px] text-[#8a8f96]">SPS</div>
        </SideBtn>
        <Ukoly gray className="mt-[3px]" />
      </div>

      <div className="flex min-w-0 flex-1 flex-col">
        <div className="mt-[8px] flex h-[19px] shrink-0 items-center">
          <Lbl className="ml-[10px] mt-[6px] w-[27px]">Stav</Lbl>
          <Lbl className="mt-[6px] w-[79px]">Doplněn</Lbl>
          <Lbl className="mt-[6px] w-[80px]">Nepřevedeno</Lbl>
          <Lbl className="mt-[6px] w-[70px]">Neuhrazené</Lbl>
          <Btn className={`ml-[502px] h-[19px] w-[25px] ${MUTED}`}>PID</Btn>
          <Field className="ml-[1px] h-[19px] w-[135px] bg-white" />
          <Lbl className="w-[66px] text-right">Č. faktury</Lbl>
          <Field className={`ml-[5px] h-[19px] w-[71px] justify-end bg-[#e8e8e8] ${MUTED}`}>1730900002</Field>
        </div>
        <div className="mt-[6px] flex h-[19px] shrink-0 items-center">
          {[
            ["ml-[7px] w-[57px]", "Kontace"],
            ["ml-[3px] w-[57px]", "Úč.doklad"],
            ["ml-[3px] w-[58px]", "Úhrady"],
            ["ml-[2px] w-[58px]", "Dobropisy"],
            ["ml-[3px] w-[58px]", "Zálohy"],
            ["ml-[2px] w-[59px]", "Zádržné"],
            ["ml-[3px] w-[58px]", "UDD"],
            ["ml-[2px] w-[67px]", "Objednávky"],
            ["ml-[3px] w-[58px]", "Smlouvy"],
          ].map(([c, t]) => (
            <Btn key={t} className={`h-[19px] ${c} ${MUTED}`}>{t}</Btn>
          ))}
          <Btn className={`ml-[2px] h-[19px] w-[58px] ${MUTED}`}><span><u>U</u>pomínky</span></Btn>
          <Btn className={`ml-[122px] h-[19px] w-[53px] ${MUTED}`}>VZ číslo</Btn>
          <Field className="ml-[1px] h-[19px] w-[135px] bg-white" />
        </div>
        <div className="mt-[7px] flex h-[14px] shrink-0 items-center">
          <div className="ml-[9px] h-[1px] w-[80px] bg-[#555]" />
          <div className="ml-[10px] w-[67px] whitespace-nowrap text-[11.5px] leading-none">Interní údaje</div>
          <div className="h-[1px] w-[907px] bg-[#777]" />
        </div>

        <div className="flex shrink-0">
          {/* left column */}
          <div className="flex w-[372px] shrink-0 flex-col">
            <div className="mt-[7px] flex h-[17px] items-center">
              <Lbl className="w-[95px] text-right">Deník</Lbl>
              <Field className={`ml-[4px] h-[17px] w-[27px] bg-[#ffbfbf] ${MUTED}`}>309</Field>
            </div>
            <div className="mt-[9px] flex h-[17px] items-center">
              <Lbl className="w-[95px] text-right">Číslo smlouvy</Lbl>
              <Field className="ml-[4px] h-[17px] w-[60px] bg-white" />
            </div>
            <div className="mt-[4px] flex h-[17px] items-center">
              <Lbl className="w-[95px] text-right">Č. objednávky</Lbl>
              <Field className="ml-[4px] h-[17px] w-[60px] bg-white" />
            </div>
            <div className="mt-[4px] flex h-[18px] items-center">
              <Lbl className="w-[95px] text-right">NS/TA/A/KP</Lbl>
              <Field className={`ml-[4px] h-[18px] w-[60px] bg-[#ffbfbf] ${MUTED}`}>10020</Field>
            </div>
            <div className="mt-[3px] flex h-[17px] items-center">
              <Lbl className="w-[95px] text-right">Popis</Lbl>
              <Field className="ml-[4px] h-[17px] w-[60px] bg-white" />
            </div>
            <div className="mt-[17px] flex h-[14px] items-center">
              <div className="ml-[9px] h-[1px] w-[80px] bg-[#555]" />
              <div className="ml-[10px] whitespace-nowrap text-[11.5px] leading-none">Opis protistrany</div>
            </div>
            <div className="relative ml-[13px] mt-[12px] flex h-[160px] w-[359px] flex-col rounded-[4px] border border-[#96a5b8]">
              <Lbl className="absolute -top-[8px] left-[28px] bg-[#d4d4d4] px-[7px]">Partner</Lbl>
              <div className="mt-[11px] flex h-[18px] items-center">
                <Lbl className="ml-[10px] w-[19px]">IČO</Lbl>
                <Field className={`ml-[6px] h-[18px] w-[90px] bg-white ${MUTED}`}>IČO 10</Field>
              </div>
              <Field className={`ml-[7px] mt-[4px] h-[19px] w-[120px] bg-[#ffbfbf] text-[#5f6e82]`}>int. název 10</Field>
              <div className="ml-[7px] mt-[1px] flex h-[94px] w-[341px] rounded-[2px] border border-[#96a5b8] bg-[#e8e8e8] pl-[2px] pt-[3px] text-[11px] leading-[15px]">
                <div className={MUTED}>
                  <div>název 10</div>
                  <div>Polská 8</div>
                  <div>787 01 ŠUMPERK</div>
                  <div>CZE</div>
                </div>
                <div className="ml-auto mt-auto flex h-[17px] w-[15px] items-center justify-center rounded-b-[6px] border border-[#96a5b8]"><Arrow dir="down" /></div>
              </div>
            </div>
          </div>

          {/* right column */}
          <div className="flex min-w-0 flex-1 flex-col">
            <Btn className={`ml-[631px] mt-[2px] h-[19px] w-[67px] ${MUTED}`}>Historie</Btn>
            <div className="mt-[6px] flex h-[18px] items-center">
              <Btn className={`ml-[464px] h-[18px] w-[75px] !justify-end pr-[3px] ${MUTED}`}>Aktualizovat</Btn>
              <Field className="ml-[3px] h-[18px] w-[168px] justify-end bg-[#e8e8e8] !p-0">
                <div className="flex h-full w-[15px] items-center justify-center bg-[#d4d4d4]"><Arrow dir="down" /></div>
              </Field>
            </div>
            <Btn className={`relative z-10 ml-[488px] mt-[22px] h-[18px] w-[92px] bg-[#d4d4d4] ${MUTED}`}>Kontroly</Btn>
            <div className="ml-[483px] -mt-[3px] flex h-[189px] w-[231px] rounded-[3px] border border-[#96a5b8] p-[3px] pb-[2px]">
              <div className={`w-[209px] bg-[#e8e8e8] pt-[0px] text-[11px] leading-[15px] ${MUTED}`}>
                <div className="whitespace-nowrap">Zadáváte splatnost zpětně</div>
                <div className="whitespace-nowrap">Období není otevřené</div>
              </div>
              <VScroll className="ml-[1px] w-[15px]" />
            </div>
            <div className="ml-[164px] mt-[9px] flex h-[18px] items-center">
              <Lbl className="w-[76px]">Datum plnění</Lbl>
              <Field className={`h-[18px] w-[80px] bg-[#ffbfbf] ${MUTED}`}>16.05.2017</Field>
              <Lbl className="ml-[17px] w-[60px]">DPH&nbsp; CZK</Lbl>
              <Field className={`h-[18px] w-[115px] justify-end bg-[#ffbfbf] ${MUTED}`}>0.00</Field>
              <Lbl className="ml-[9px] w-[72px]">Celkem&nbsp; CZK</Lbl>
              <Field className={`h-[18px] w-[116px] justify-end bg-[#ffbfbf] ${MUTED}`}>250.00</Field>
            </div>
          </div>
        </div>

        {/* item table */}
        <div className="mt-[14px] flex h-[18px] shrink-0 items-center">
          <Btn className={`ml-[26px] h-[18px] w-[24px] ${MUTED}`}>Ř.</Btn>
          <Lbl className="ml-[3px] w-[273px]">Text položky</Lbl>
          <Lbl className="w-[175px]">Sazba DPH</Lbl>
          <Lbl className="w-[27px]">K%</Lbl>
          <Lbl className="w-[54px]">Množství</Lbl>
          <Lbl className="w-[52px]">MJ</Lbl>
          <Lbl className="w-[63px]">Cena/jedn.</Lbl>
          <Lbl className="w-[36px]">CZK</Lbl>
          <Lbl className="w-[81px]">Cena bez DPH</Lbl>
          <Lbl className="w-[90px]">CZK</Lbl>
          <Lbl className="w-[27px]">DPH</Lbl>
          <Lbl className="w-[67px]">CZK</Lbl>
          <Lbl className="w-[48px]">Celkem</Lbl>
          <Lbl>CZK</Lbl>
        </div>
        <div className={`mt-[2px] flex h-[18px] shrink-0 ${MUTED}`}>
          <div className="ml-[6px] flex h-[18px] w-[15px] items-center justify-center rounded-t-[6px] border border-[#96a5b8]"><Arrow dir="up" /></div>
          <Cell className="ml-[5px] w-[26px] justify-end bg-[#bbddff]">1</Cell>
          <Cell className="ml-[2px] w-[267px] bg-[#bbddff]">text</Cell>
          <div className="relative ml-[4px]">
            <Cell className="w-[17px] bg-[#bbddff]" />
            <Red className="-left-[4px] -top-[4px] h-[25px] w-[23px] border-[3px]" />
          </div>
          <Cell className="ml-[2px] w-[145px] bg-[#bbddff]">PDP bez nároku na odpočet</Cell>
          <Cell className="ml-[1px] w-[26px] bg-[#bbddff]">100</Cell>
          <Cell className="ml-[2px] w-[61px] bg-[#bbddff]" />
          <Cell className="ml-[2px] w-[25px] bg-[#bbddff]" />
          <Cell className="ml-[1px] w-[116px] bg-[#bbddff]" />
          <Cell className="ml-[1px] w-[115px] justify-end bg-[#bbddff]">250.00</Cell>
          <Cell className="ml-[2px] w-[114px] justify-end bg-[#bbddff]">0.00</Cell>
          <Cell className="ml-[2px] w-[115px] justify-end bg-[#bbddff]">250.00</Cell>
        </div>
      </div>
    </div>

    <SazbyDialog />
  </div>
);

export default function App() {
  return (
    <div className="flex h-[1116px] w-[1142px] flex-col overflow-hidden bg-[#d4d4d4] font-['Liberation_Sans',Arial,sans-serif] text-black">
      <TopWindow />
      <div className="h-[2px] shrink-0 bg-white" />
      <Toolbar />
      <BottomWindow />
    </div>
  );
}
